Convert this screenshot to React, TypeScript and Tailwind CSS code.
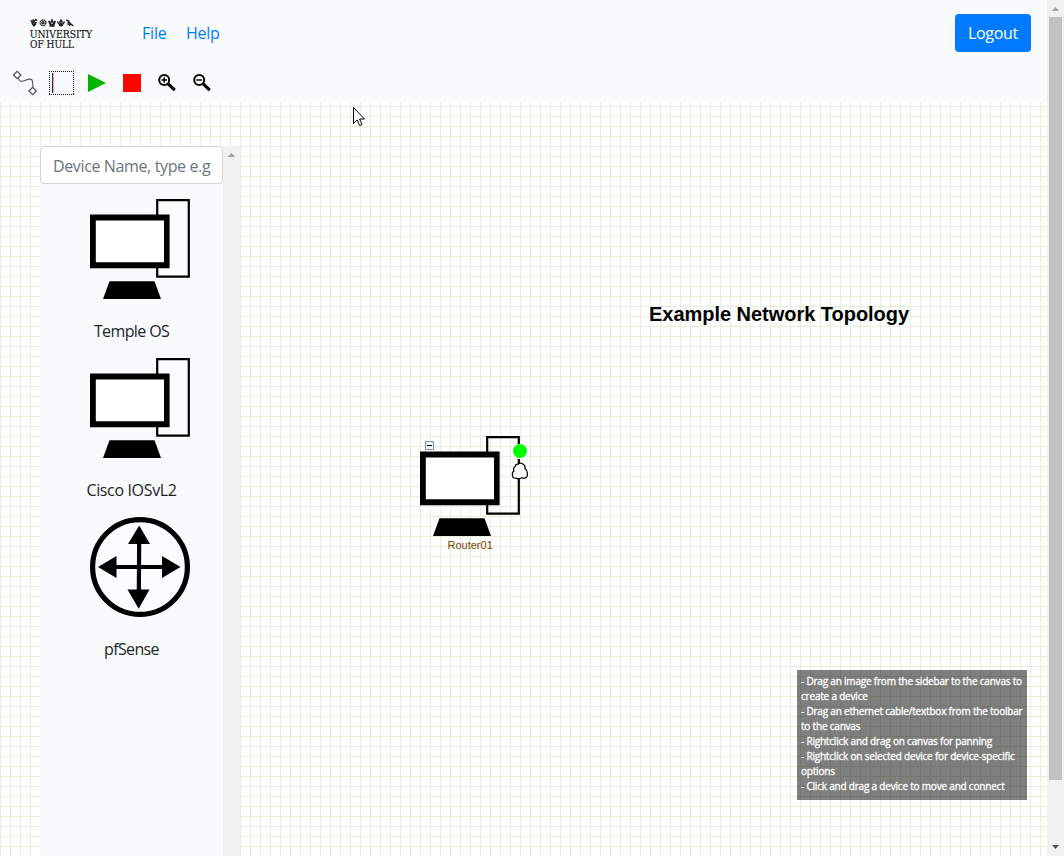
import React from "react";

const ui = "font-['Open_Sans','Noto_Sans',sans-serif]";

function Logo() {
  return (
    <svg width="66" height="34" viewBox="0 0 66 34" className="block overflow-visible" aria-label="University of Hull">
      <g fill="none" stroke="#222" strokeWidth="1.3">
        <path d="M0.6 2 2 4 3.2 2 4 3.6 5.5 1.5 7.2 2.6M1.2 4.6H6.8M2 5.5 4 8 6 5.5M4 4V8.5" />
        <circle cx="13" cy="4.8" r="2.9" strokeDasharray="1.8 .5" />
        <circle cx="13" cy="4.8" r="1.1" />
        <path d="M18.6 3 20.2 6.5H24L25.4 3 23.3 5 22 1.8 20.7 5ZM19.5 8H24.7" />
        <path d="M31 1.2V8.8M27.3 3.6 29.2 6H32.8L34.7 3.6M29.2 4.4 31 2.2 32.8 4.4M29 7.3H33" />
        <path d="M36.3 2 38.5 3.2 40 5.3 43.4 8M38.5 3.2 38 7M40 5.3 39.5 8" strokeWidth="1.5" />
      </g>
      <g fill="#151515" fontFamily="'DejaVu Serif', serif" stroke="#151515" strokeWidth=".15">
        <text x="-0.3" y="20" fontSize="10.6" textLength="62.3" lengthAdjust="spacingAndGlyphs">UNIVERSITY</text>
        <text x="0" y="29.6" fontSize="10.6" textLength="44" lengthAdjust="spacingAndGlyphs">OF HULL</text>
      </g>
    </svg>
  );
}

function Magnifier({ plus = false }: { plus?: boolean }) {
  return (
    <svg width="20" height="20" viewBox="0 0 20 20" className="block">
      <circle cx="7.2" cy="7" r="5" fill="#fff" stroke="#000" strokeWidth="2" />
      <path d="M10.9 10.6 17.8 17.2" stroke="#000" strokeWidth="3.2" />
      <path d={plus ? "M4.4 7H10M7.2 4.2V9.8" : "M4.4 7H10"} stroke="#000" strokeWidth="1.5" />
    </svg>
  );
}

function Toolbar() {
  return (
    <div className="flex h-[38px] items-start pl-[12px] pt-[6px]">
      <svg width="27" height="26" viewBox="0 0 27 26" className="block" fill="none" stroke="#555">
        <path d="M1.5 5 5.2 1.3 8.9 5 5.2 8.7ZM17 21 20.7 17.3 24.4 21 20.7 24.7Z" strokeWidth="1.3" fill="#fff" />
        <path d="M6.5 8C7 11 9 12 12 10.8C16 9 20 7.8 20.5 11.5L21 17" strokeWidth="1.1" />
      </svg>
      <svg width="26" height="26" viewBox="0 0 26 26" className="ml-[10px] block">
        <path d="M0 1H25V25H0Z" fill="#f9fafd" />
        <path d="M0 1.5H25M0 24.5H25M0.5 1V25M24.5 1V25" fill="none" stroke="#111" strokeDasharray="1 1" shapeRendering="crispEdges" />
        <path d="M3.5 3V23" stroke="#900" />
        <path d="M4.5 3V23" stroke="#8fc4dc" />
      </svg>
      <svg width="18" height="26" viewBox="0 0 18 26" className="ml-[13px] block">
        <path d="M0 4 18 13 0 22Z" fill="#00b400" />
      </svg>
      <div className="ml-[17px] mt-[4px] size-[18px] bg-[#ff0500]" />
      <div className="ml-[16px] mt-[3px]"><Magnifier plus /></div>
      <div className="ml-[15px] mt-[3px]"><Magnifier /></div>
    </div>
  );
}

function Computer({ canvas = false }: { canvas?: boolean }) {
  return (
    <svg width="100" height="100" viewBox="0 0 100 100" className="block">
      <path d="M67.2 1.2H98.8V77.6H67.2Z" fill={canvas ? "none" : "#fcfcff"} stroke="#000" strokeWidth="2.2" />
      <path d="M0 15.4H79.6V69.2H0Z" fill="#000" />
      <path d="M5.8 21.5H74V63.2H5.8Z" fill="#fff" />
      <path d="M19.5 82.2H64.5L71 100H13Z" fill="#000" />
    </svg>
  );
}

function Router() {
  return (
    <svg width="100" height="100" viewBox="0 0 100 100" className="block">
      <circle cx="50" cy="50" r="47.4" fill="#fbfcff" stroke="#000" strokeWidth="5.2" />
      <path d="M49.2 20 48.8 80M20 50H80" stroke="#000" strokeWidth="4.2" />
      <path d="M49.2 8.5 60 27H38ZM48.7 91.8 59.5 72.5H37.5ZM8 50 26.5 39V61ZM90.5 50 72 39V61Z" fill="#000" />
    </svg>
  );
}

const devices = [
  { name: "Temple OS", icon: <Computer />, track: "tracking-[-0.62px]" },
  { name: "Cisco IOSvL2", icon: <Computer />, track: "tracking-[-0.35px]" },
  { name: "pfSense", icon: <Router />, track: "tracking-[-0.65px]" },
];

function Sidebar() {
  return (
    <aside className="ml-[40px] mt-[44px] flex h-[710px] w-[200px] bg-[#f8fafc]">
      <div className="w-[183px]">
        <input
          placeholder="Device Name, type e.g"
          className="block h-[38px] w-[183px] rounded border border-[#ced4da] bg-white pl-[12px] pr-[8px] pt-[2px] text-[16px] tracking-[-0.37px] placeholder:text-[#6c757d] placeholder:opacity-100"
        />
        <ul className="pt-[15px]">
          {devices.map((d) => (
            <li key={d.name} className="h-[159px]">
              <div className="pl-[50px]">{d.icon}</div>
              <div className={`mt-[20px] text-center text-[16px] leading-6 text-[#212529] ${d.track}`}>{d.name}</div>
            </li>
          ))}
        </ul>
      </div>
      <div className="w-[17px] bg-[#f1f1f1] pt-[7px]">
        <svg width="17" height="5" className="block"><path d="M4.5 4 8.5 0 12.5 4Z" fill="#a3a3a3" /></svg>
      </div>
    </aside>
  );
}

const hints = [
  "- Drag an image from the sidebar to the canvas to",
  "create a device",
  "- Drag an ethernet cable/textbox from the toolbar",
  "to the canvas",
  "- Rightclick and drag on canvas for panning",
  "- Rightclick on selected device for device-specific",
  "options",
  "- Click and drag a device to move and connect",
];

function Canvas() {
  return (
    <main className="relative h-[754px] overflow-hidden bg-white bg-[linear-gradient(to_right,#e8efdc_1px,transparent_1px),linear-gradient(to_bottom,#e8efdc_1px,transparent_1px)] bg-[size:10px_10px] bg-[position:0px_4px]">
      <Sidebar />
      <h1 className="absolute left-[649px] top-[200px] whitespace-nowrap font-['Liberation_Sans',sans-serif] text-[20px] font-bold leading-6 tracking-[-0.03px] text-black">
        Example Network Topology
      </h1>
      <div className="absolute left-[420px] top-[334px] w-[110px]">
        <Computer canvas />
        <div className="absolute left-[27.5px] top-[103px] font-['Liberation_Sans',sans-serif] text-[11px] leading-3 text-[#774400]">Router01</div>
        <svg width="10" height="10" viewBox="0 0 10 10" className="absolute left-[5px] top-[5px]">
          <path d="M.5.5H8.5V8.5H.5Z" fill="#eef3f7" stroke="#7a92a8" />
          <path d="M2 4.5H7" stroke="#000" />
        </svg>
        <svg width="18" height="40" viewBox="0 0 18 40" className="absolute left-[91px] top-[5px]">
          <path d="M7 3H10V18H7Z" fill="#fff" />
          <path d="M8 18V24" stroke="#000" strokeWidth="2" />
          <circle cx="9" cy="10" r="7" fill="#00ff00" />
          <path d="M4.5 25Q4.5 22.8 7 23.2Q9.5 21 12.5 23.5Q14.5 24.5 14 27.5Q17.5 30 16 35.5Q15 38 11 36.8Q8 38.5 5 37.2Q1 37.5 1.5 33Q1 31 3 30Q1.5 27 4.5 25Z" fill="#fff" stroke="#000" strokeWidth="1.3" />
        </svg>
      </div>
      <div className="absolute left-[797px] top-[568px] h-[130px] w-[230px] whitespace-nowrap bg-black/50 px-[4px] py-[4px] text-[10px] leading-[15px] tracking-[-0.2px] text-white [-webkit-text-stroke:0.3px_white]">
        {hints.map((h) => <p key={h}>{h}</p>)}
      </div>
      <svg width="14" height="21" viewBox="0 0 14 21" className="absolute left-[353px] top-[5px]">
        <path d="M.5.5V16.5L4.2 13 6.7 18.6 9 17.5 6.6 12H11.5Z" fill="#fff" stroke="#000" />
      </svg>
    </main>
  );
}

export default function App() {
  return (
    <div className={`flex h-[856px] w-[1064px] overflow-hidden ${ui}`}>
      <div className="w-[1047px]">
        <header className="h-[102px] bg-[#f8fafc]">
          <nav className="flex h-[64px] items-start pl-[30px] pr-[16px] pt-[14px] text-[16px] leading-6">
            <div className="mt-[4px] w-[112px]"><Logo /></div>
            <a className="mt-[7px] w-[44px] tracking-[-0.2px] text-[#007bff]">File</a>
            <a className="mt-[7px] tracking-[-0.3px] text-[#007bff]">Help</a>
            <button className="ml-auto h-[38px] w-[76px] rounded bg-[#007bff] tracking-[-0.3px] text-white">Logout</button>
          </nav>
          <Toolbar />
        </header>
        <Canvas />
      </div>
      <div className="flex w-[17px] flex-col items-center bg-[#f1f1f1]">
        <svg width="17" height="17" className="block"><path d="M5 11 8.5 7 12 11Z" fill="#a3a3a3" /></svg>
        <div className="h-[763px] w-[13px] bg-[#c1c1c1]" />
        <svg width="17" height="17" className="mt-auto block"><path d="M5 6 8.5 10 12 6Z" fill="#505050" /></svg>
      </div>
    </div>
  );
}
